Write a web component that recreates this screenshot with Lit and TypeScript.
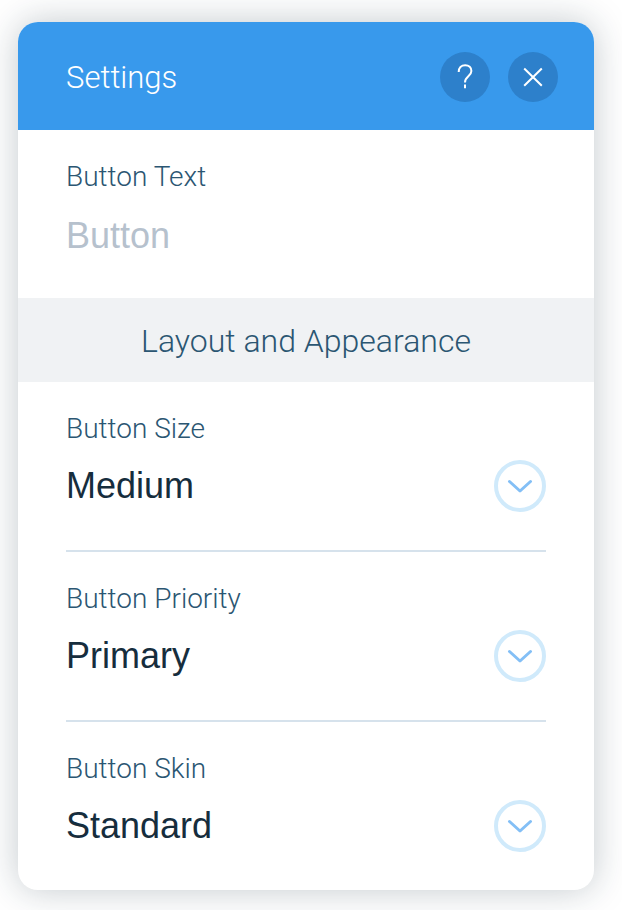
import { LitElement, html, css } from "lit";
import { customElement, property } from "lit/decorators.js";

const labelStyles = css`
  label {
    font-family: Roboto, "Liberation Sans", sans-serif;
    font-size: 28px;
    line-height: 32px;
    font-weight: 300;
    font-variant-ligatures: none;
    color: #2b5672;
  }
`;

@customElement("select-field")
class SelectField extends LitElement {
  @property() label = "";
  @property({ type: Array }) options: string[] = [];

  static styles = [
    labelStyles,
    css`
      :host {
        display: flex;
        flex-direction: column;
        gap: 15px;
        margin: 0 48px;
        padding: 31px 0 38px;
        border-bottom: 2px solid #d6e2ec;
      }
      :host(:last-of-type) {
        border-bottom: 0;
      }
      .control {
        display: grid;
        grid-template-columns: 1fr 52px;
        align-items: center;
      }
      select {
        grid-area: 1 / 1 / 2 / 3;
        appearance: none;
        width: 100%;
        height: 52px;
        margin: 0;
        padding: 0;
        border: 0;
        outline: 0;
        background: transparent;
        font-family: "Liberation Sans", Arial, sans-serif;
        font-size: 36px;
        line-height: 52px;
        color: #162d3d;
      }
      .chevron {
        grid-area: 1 / 2 / 2 / 3;
        display: block;
        width: 52px;
        height: 52px;
        pointer-events: none;
      }
    `,
  ];

  render() {
    return html`
      <label for="choice">${this.label}</label>
      <div class="control">
        <select id="choice">
          ${this.options.map((o) => html`<option>${o}</option>`)}
        </select>
        <svg class="chevron" viewBox="0 0 52 52" fill="none" aria-hidden="true">
          <circle cx="26" cy="26" r="24" stroke="#d0eafb" stroke-width="4" />
          <path
            d="M15.5 21.5 L26 31 L36.5 21.5"
            stroke="#83bff6"
            stroke-width="3"
            stroke-linecap="round"
            stroke-linejoin="round"
          />
        </svg>
      </div>
    `;
  }
}

@customElement("app-root")
class AppRoot extends LitElement {
  static styles = [
    labelStyles,
    css`
      :host {
        display: block;
        padding: 22px 28px 20px 18px;
        background: #ffffff;
        font-family: Roboto, "Liberation Sans", sans-serif;
      }
      .panel {
        border-radius: 20px;
        background: #ffffff;
        box-shadow: 0 0 36px rgba(22, 45, 61, 0.26);
      }
      header {
        display: flex;
        align-items: center;
        gap: 18px;
        padding: 30px 36px 28px 48px;
        border-radius: 20px 20px 0 0;
        background: #3899ec;
        color: #ffffff;
      }
      h1 {
        flex: 1;
        margin: 0;
        padding-top: 2px;
        font-size: 31px;
        line-height: 40px;
        font-weight: 300;
        font-variant-ligatures: none;
      }
      .round {
        display: block;
        width: 50px;
        height: 50px;
        padding: 0;
        border: 0;
        border-radius: 50%;
        background: #2d80cb;
        cursor: pointer;
      }
      .round svg {
        display: block;
      }
      .text-field {
        display: flex;
        flex-direction: column;
        gap: 17px;
        padding: 31px 48px 36px;
      }
      input {
        width: 100%;
        height: 52px;
        box-sizing: border-box;
        padding: 0;
        border: 0;
        outline: 0;
        background: transparent;
        font-family: "Liberation Sans", Arial, sans-serif;
        font-size: 36px;
        color: #162d3d;
      }
      input::placeholder {
        color: #b6c1cd;
        opacity: 1;
      }
      h2 {
        margin: 0;
        padding: 23px 48px 21px;
        background: #f0f2f4;
        font-size: 32px;
        line-height: 40px;
        font-weight: 300;
        text-align: center;
        color: #2b5672;
      }
    `,
  ];

  render() {
    return html`
      <main class="panel">
        <header>
          <h1>Settings</h1>
          <button class="round" type="button" aria-label="Help">
            <svg width="50" height="50" viewBox="0 0 50 50" fill="none" stroke="#ffffff" stroke-width="2">
              <path d="M18.7 20 C18.7 15.8 21.3 13.2 25.2 13.2 C28.9 13.2 31.4 15.6 31.4 19 C31.4 24.4 25 24.4 25 30.5" />
              <path d="M25 32.5 V36.2" />
            </svg>
          </button>
          <button class="round" type="button" aria-label="Close">
            <svg width="50" height="50" viewBox="0 0 50 50" fill="none" stroke="#ffffff" stroke-width="2">
              <path d="M16.2 16.5 L33.8 33.7 M33.8 16.5 L16.2 33.7" />
            </svg>
          </button>
        </header>
        <div class="text-field">
          <label for="button-text">Button Text</label>
          <input id="button-text" type="text" placeholder="Button" />
        </div>
        <h2>Layout and Appearance</h2>
        <select-field label="Button Size" .options=${["Medium", "Small", "Large"]}></select-field>
        <select-field label="Button Priority" .options=${["Primary", "Secondary"]}></select-field>
        <select-field label="Button Skin" .options=${["Standard", "Light", "Dark"]}></select-field>
      </main>
    `;
  }
}
